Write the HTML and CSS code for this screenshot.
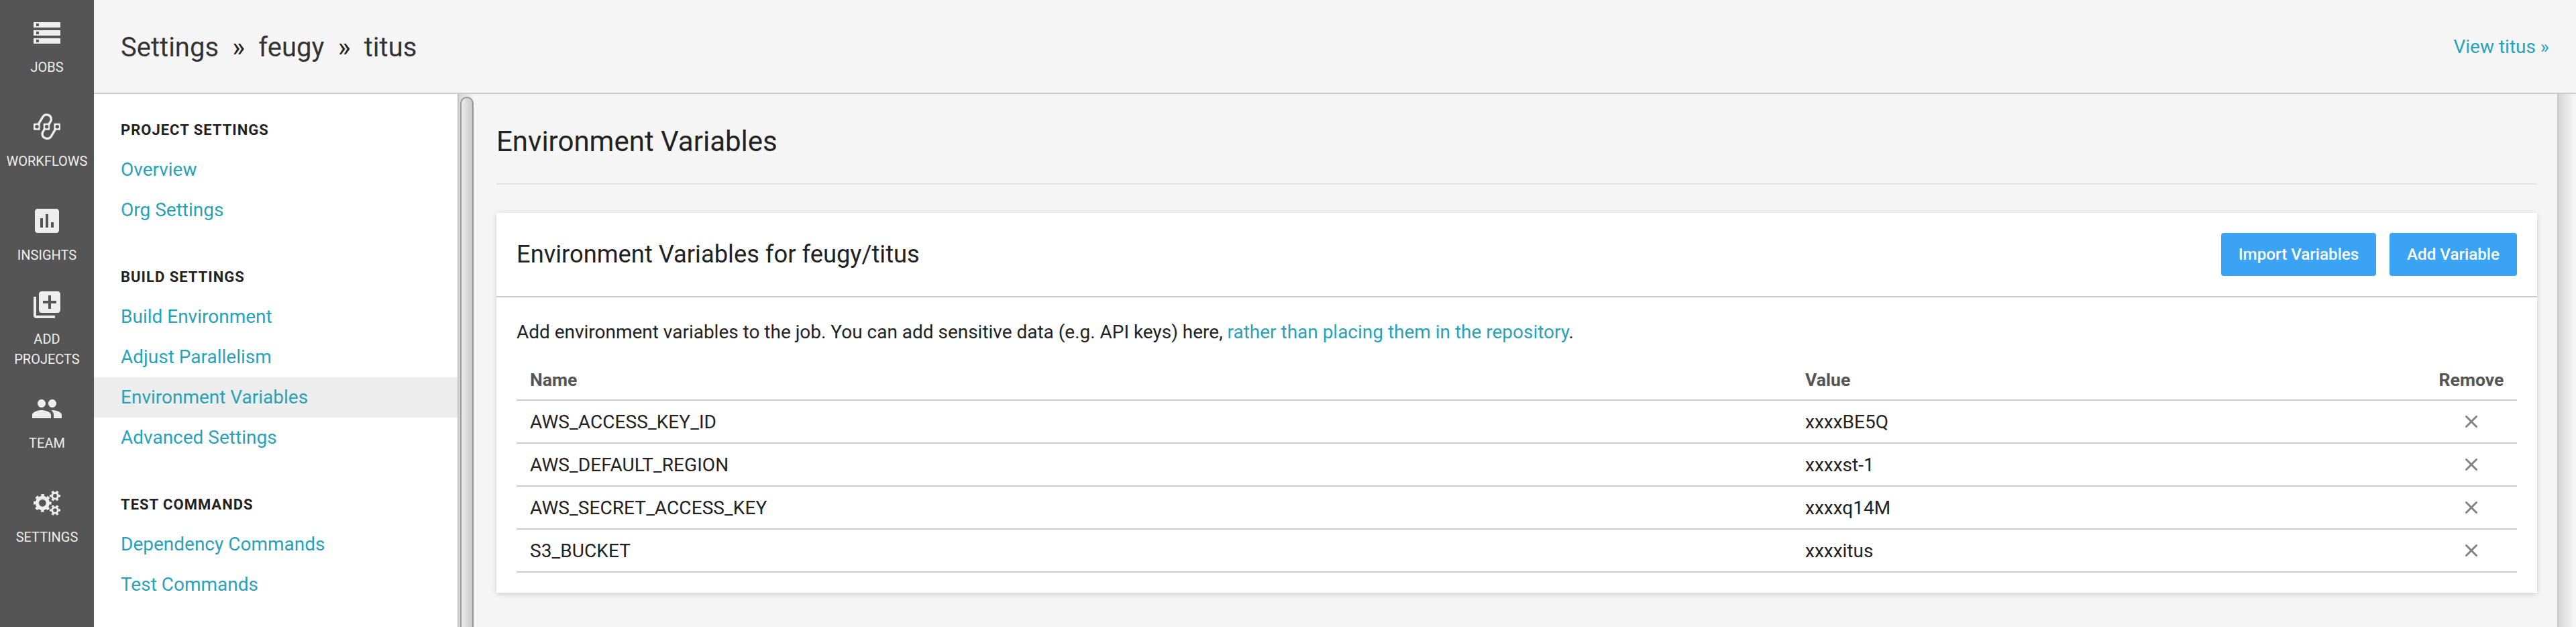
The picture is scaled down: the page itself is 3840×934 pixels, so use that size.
FILE: index.html
```html
<!DOCTYPE html>
<html lang="en">
<head>
<meta charset="utf-8">
<title>Environment Variables</title>
<link rel="stylesheet" href="styles.css">
</head>
<body>
<div class="app">
  <aside class="sidebar">
    <a class="side-item">
      <svg class="side-icon" viewBox="0 0 24 24"><path d="M2 20h20v-4H2v4zm2-3h2v2H4v-2zM2 4v4h20V4H2zm4 3H4V5h2v2zm-4 7h20v-4H2v4zm2-3h2v2H4v-2z"/></svg>
      <span class="side-label">JOBS</span>
    </a>
    <a class="side-item">
      <svg class="side-icon" viewBox="0 0 144 144">
        <g class="line"><path d="M33 62 51 31C63 9 91 17 91 39C91 47 85 53 80 61"/><path d="M111 80 93 111C81 133 51 125 51 103C51 95 57 89 62 81"/></g>
        <path fill-rule="evenodd" d="M15 56h23q3 0 3 3v24q0 3-3 3H15q-3 0-3-3V59q0-3 3-3zm12 7a8 8 0 1 0 0 16 8 8 0 1 0 0-16z"/>
        <path fill-rule="evenodd" d="M59 56h23q3 0 3 3v24q0 3-3 3H59q-3 0-3-3V59q0-3 3-3zm12 7a8 8 0 1 0 0 16 8 8 0 1 0 0-16z"/>
        <path fill-rule="evenodd" d="M106 56h23q3 0 3 3v24q0 3-3 3h-23q-3 0-3-3V59q0-3 3-3zm12 7a8 8 0 1 0 0 16 8 8 0 1 0 0-16z"/>
      </svg>
      <span class="side-label">WORKFLOWS</span>
    </a>
    <a class="side-item">
      <svg class="side-icon" viewBox="0 0 24 24"><path d="M19 3H5c-1.100 0-2 .9-2 2v14c0 1.100.9 2 2 2h14c1.100 0 2-.9 2-2V5c0-1.100-.9-2-2-2zM9 17H7v-7h2v7zm4 0h-2V7h2v10zm4 0h-2v-4h2v4z"/></svg>
      <span class="side-label">INSIGHTS</span>
    </a>
    <a class="side-item">
      <svg class="side-icon" viewBox="0 0 24 24"><path d="M4 6H2v14c0 1.100.9 2 2 2h14v-2H4V6zm16-4H8c-1.100 0-2 .9-2 2v12c0 1.100.9 2 2 2h12c1.100 0 2-.9 2-2V4c0-1.100-.9-2-2-2zm-1 9h-4v4h-2v-4H9V9h4V5h2v4h4v2z"/></svg>
      <span class="side-label">ADD<br>PROJECTS</span>
    </a>
    <a class="side-item">
      <svg class="side-icon" viewBox="0 0 24 24"><path d="M16 11c1.660 0 2.990-1.340 2.990-3S17.660 5 16 5c-1.660 0-3 1.340-3 3s1.340 3 3 3zm-8 0c1.660 0 2.990-1.340 2.990-3S9.660 5 8 5C6.340 5 5 6.340 5 8s1.340 3 3 3zm0 2c-2.330 0-7 1.170-7 3.500V19h14v-2.500c0-2.330-4.670-3.500-7-3.500zm8 0c-.29 0-.62.020-.97.050 1.160.84 1.970 1.970 1.970 3.450V19h6v-2.500c0-2.330-4.670-3.500-7-3.500z"/></svg>
      <span class="side-label">TEAM</span>
    </a>
    <a class="side-item">
      <svg class="side-icon" viewBox="0 0 144 144">
        <g class="gear">
          <circle cx="52" cy="73" r="24" stroke-width="16"/>
          <circle cx="52" cy="73" r="35" stroke-width="10" pathLength="16" stroke-dasharray="1 1" stroke-dashoffset=".5"/>
          <circle cx="108" cy="41" r="13" stroke-width="9"/>
          <circle cx="108" cy="41" r="20" stroke-width="8" pathLength="12" stroke-dasharray="1 1" stroke-dashoffset=".5"/>
          <circle cx="108" cy="105" r="13" stroke-width="9"/>
          <circle cx="108" cy="105" r="20" stroke-width="8" pathLength="12" stroke-dasharray="1 1" stroke-dashoffset=".5"/>
        </g>
      </svg>
      <span class="side-label">SETTINGS</span>
    </a>
  </aside>

  <div class="page">
    <header class="topbar">
      <div class="crumbs"><span>Settings</span><span class="sep">»</span><span>feugy</span><span class="sep">»</span><span>titus</span></div>
      <a class="view-link">View titus »</a>
    </header>

    <div class="body">
      <nav class="menu">
        <section class="menu-group">
          <h2 class="menu-title">PROJECT SETTINGS</h2>
          <a class="menu-link">Overview</a>
          <a class="menu-link">Org Settings</a>
        </section>
        <section class="menu-group">
          <h2 class="menu-title">BUILD SETTINGS</h2>
          <a class="menu-link">Build Environment</a>
          <a class="menu-link">Adjust Parallelism</a>
          <a class="menu-link active">Environment Variables</a>
          <a class="menu-link">Advanced Settings</a>
        </section>
        <section class="menu-group">
          <h2 class="menu-title">TEST COMMANDS</h2>
          <a class="menu-link">Dependency Commands</a>
          <a class="menu-link">Test Commands</a>
        </section>
      </nav>
      <div class="scrollbar"><div class="thumb"></div></div>

      <main class="content">
        <h1 class="heading">Environment Variables</h1>
        <section class="card">
          <div class="card-head">
            <h2 class="card-title">Environment Variables for feugy/titus</h2>
            <div class="actions">
              <button class="btn btn-import">Import Variables</button>
              <button class="btn btn-add">Add Variable</button>
            </div>
          </div>
          <div class="card-body">
            <p class="intro">Add environment variables to the job. You can add sensitive data (e.g. API keys) here, <a class="link">rather than placing them in the repository</a>.</p>
            <table class="vars">
              <thead>
                <tr><th class="col-name">Name</th><th class="col-value">Value</th><th class="col-remove">Remove</th></tr>
              </thead>
              <tbody>
                <tr><td class="name">AWS_ACCESS_KEY_ID</td><td>xxxxBE5Q</td><td class="remove"><svg class="cross" viewBox="0 0 18 18"><path d="M1.500 1.500l15 15M16.500 1.500l-15 15"/></svg></td></tr>
                <tr><td class="name">AWS_DEFAULT_REGION</td><td>xxxxst-1</td><td class="remove"><svg class="cross" viewBox="0 0 18 18"><path d="M1.500 1.500l15 15M16.500 1.500l-15 15"/></svg></td></tr>
                <tr><td class="name">AWS_SECRET_ACCESS_KEY</td><td>xxxxq14M</td><td class="remove"><svg class="cross" viewBox="0 0 18 18"><path d="M1.500 1.500l15 15M16.500 1.500l-15 15"/></svg></td></tr>
                <tr><td class="name">S3_BUCKET</td><td>xxxxitus</td><td class="remove"><svg class="cross" viewBox="0 0 18 18"><path d="M1.500 1.500l15 15M16.500 1.500l-15 15"/></svg></td></tr>
              </tbody>
            </table>
          </div>
        </section>
      </main>
      <div class="scrollbar"></div>
    </div>
  </div>
</div>
</body>
</html>
```

FILE: styles.css
```css
* { box-sizing: border-box; }
body {
  margin: 0;
  font: 400 28px/33px Roboto, sans-serif;
  color: #222;
  background: #f5f5f5;
}
h1, h2, p { margin: 0; font-weight: 400; }

.app { display: flex; height: 934px; overflow: hidden; }

/* Icon sidebar */
.sidebar { flex: none; width: 140px; background: #555; }
.side-item {
  display: flex;
  flex-direction: column;
  align-items: center;
  justify-content: flex-end;
  gap: 12px;
  height: 140px;
  padding-bottom: 25px;
  color: #eee;
}
.side-item:nth-child(4) { padding-bottom: 10px; }
.side-icon { flex: none; width: 48px; height: 48px; fill: #eee; }
.side-icon .line { fill: none; stroke: #eee; stroke-width: 10; }
.side-icon .gear { fill: none; stroke: #eee; }
.side-label { font-size: 20px; line-height: 30px; text-align: center; white-space: nowrap; }

/* Top bar */
.page { flex: 1; min-width: 0; display: flex; flex-direction: column; }
.topbar {
  flex: none;
  display: flex;
  justify-content: space-between;
  height: 140px;
  padding: 47px 40px 0;
  border-bottom: 2px solid #ccc;
}
.crumbs { display: flex; font-size: 40px; line-height: 47px; color: #333; }
.sep { width: 59.300px; text-align: center; color: #222; }
.view-link { margin-top: 6px; color: #29a2b9; }

.body { flex: 1; min-height: 0; display: flex; }

/* Settings menu */
.menu {
  flex: none;
  display: flex;
  flex-direction: column;
  gap: 57px;
  width: 542px;
  padding-top: 41px;
  background: #fff;
}
.menu-title {
  margin-bottom: 17px;
  padding-left: 40px;
  font-size: 22px;
  line-height: 25px;
  font-weight: 700;
  letter-spacing: 1px;
}
.menu-link {
  display: block;
  height: 60px;
  padding-left: 40px;
  line-height: 59px;
  color: #29a2b9;
}
.menu-link.active { background: #ededed; }

/* Scrollbars */
.scrollbar {
  flex: none;
  width: 28px;
  padding: 4px 4px 0 2px;
  border-left: 2px solid #c5c5c5;
  background: linear-gradient(90deg, #d6d6d6, #f5f5f5 90%);
}
.thumb {
  height: 820px;
  border: 2px solid #979797;
  border-radius: 10px;
  background: linear-gradient(90deg, #ededed, #c8c8c8);
}

/* Content */
.content { flex: 1; min-width: 0; padding: 46px 30px 0; }
.heading {
  height: 89px;
  margin-bottom: 42px;
  border-bottom: 2px solid #e4e4e4;
  font-size: 42px;
  line-height: 49px;
}
.card { height: 566px; background: #fff; box-shadow: 0 2px 8px rgba(0, 0, 0, .17); }
.card-head {
  display: flex;
  align-items: center;
  justify-content: space-between;
  height: 126px;
  padding: 0 30px;
  border-bottom: 2px solid #ccc;
}
.card-title { font-size: 36.300px; line-height: 42px; }
.actions { display: flex; gap: 20px; }
.btn {
  height: 64px;
  padding: 0;
  border: 0;
  border-radius: 4px;
  background: #3aa3f3;
  color: #fff;
  font: 500 24.200px/64px Roboto, sans-serif;
}
.btn-import { width: 231px; }
.btn-add { width: 190px; }
.card-body { padding: 35px 30px 30px; }
.intro { margin-bottom: 40px; letter-spacing: -.015px; }
.link { color: #29a2b9; }

.vars { width: 100%; table-layout: fixed; border-collapse: separate; border-spacing: 0; }
.vars th {
  padding: 0 20px 14px;
  border-bottom: 2px solid #ccc;
  font-size: 26.600px;
  line-height: 30px;
  font-weight: 700;
  color: #555;
  text-align: left;
}
.vars td { height: 64px; padding: 15px 20px 14px; border-bottom: 2px solid #ccc; }
.vars .name { letter-spacing: .08px; }
.vars .col-name { width: 1901px; }
.vars .col-remove { width: 136px; padding-left: 0; padding-right: 0; text-align: center; }
.vars .remove { padding: 0; text-align: center; line-height: 0; }
.cross { width: 18px; height: 18px; fill: none; stroke: #858585; stroke-width: 3; stroke-linecap: round; }
```
